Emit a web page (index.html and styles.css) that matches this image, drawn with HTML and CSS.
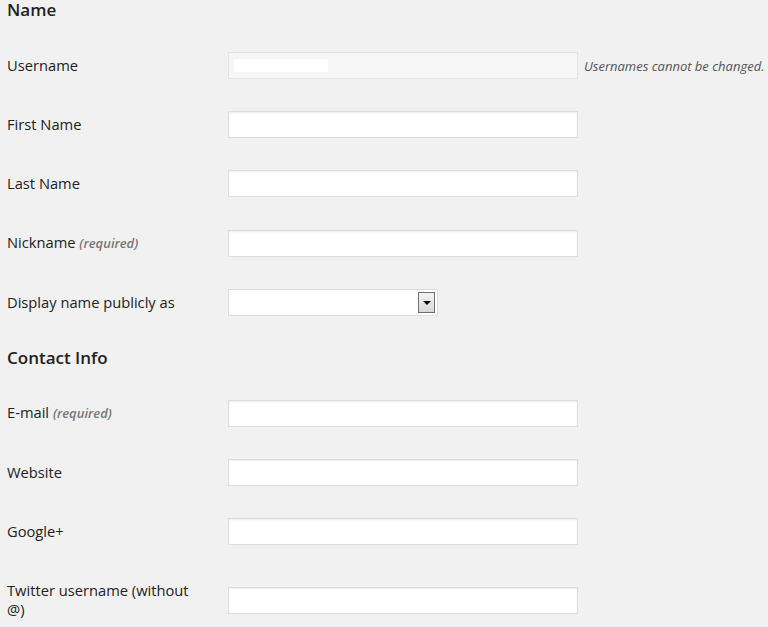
FILE: index.html
```html
<!DOCTYPE html>
<html lang="en">
  <head>
    <meta charset="UTF-8" />
    <meta name="viewport" content="width=device-width, initial-scale=1.0" />
    <title>Profile</title>
    <link rel="stylesheet" href="styles.css">
  </head>
  <body>
    <h3 class="section-title first">Name</h3>
    <div class="form-table">
      <div class="row">
        <label class="field-label">Username</label>
        <div class="field">
          <div class="input disabled"><span class="redacted"></span></div>
          <span class="note">Usernames cannot be changed.</span>
        </div>
      </div>
      <div class="row">
        <label class="field-label">First Name</label>
        <div class="field"><input class="input" type="text" /></div>
      </div>
      <div class="row">
        <label class="field-label">Last Name</label>
        <div class="field"><input class="input" type="text" /></div>
      </div>
      <div class="row">
        <label class="field-label">Nickname <span class="required">(required)</span></label>
        <div class="field"><input class="input" type="text" /></div>
      </div>
      <div class="row">
        <label class="field-label">Display name publicly as</label>
        <div class="field">
          <div class="select">
            <span class="select-btn"><span class="arrow"></span></span>
          </div>
        </div>
      </div>
    </div>

    <h3 class="section-title">Contact Info</h3>
    <div class="form-table">
      <div class="row">
        <label class="field-label">E-mail <span class="required">(required)</span></label>
        <div class="field"><input class="input" type="text" /></div>
      </div>
      <div class="row">
        <label class="field-label">Website</label>
        <div class="field"><input class="input" type="text" /></div>
      </div>
      <div class="row">
        <label class="field-label">Google+</label>
        <div class="field"><input class="input" type="text" /></div>
      </div>
      <div class="row">
        <label class="field-label">Twitter username (without @)</label>
        <div class="field"><input class="input" type="text" /></div>
      </div>
    </div>
  </body>
</html>
```

FILE: styles.css
```css
body {
  margin: 0;
  padding: 0 0 0 7px;
  background-color: #f1f1f1;
  font-family: "Open Sans", "Liberation Sans", sans-serif;
  font-size: 14.7px;
  color: #222;
  overflow: hidden;
}

.section-title {
  margin: 16px 0 15px;
  font-size: 17px;
  font-weight: 600;
  line-height: 20px;
  color: #222;
}

.section-title.first {
  margin: 0 0 16px;
}

.row {
  display: flex;
  align-items: center;
}

.field-label {
  flex: none;
  width: 190px;
  padding: 20px 31px 20px 0;
  line-height: 19px;
}

.required {
  font-size: 13px;
  font-style: italic;
  font-weight: 600;
  color: #777;
}

.field {
  display: flex;
  align-items: center;
}

.input {
  box-sizing: border-box;
  width: 350px;
  height: 27px;
  margin: 0;
  padding: 3px 5px;
  border: 1px solid #ddd;
  background: #fff;
  box-shadow: inset 0 1px 2px rgba(0, 0, 0, 0.07);
  font: inherit;
}

.input.disabled {
  background: #f6f6f6;
  border-color: #e2e2e2;
  box-shadow: none;
  display: flex;
  align-items: center;
}

.redacted {
  display: block;
  width: 94px;
  height: 13px;
  background: #fff;
}

.note {
  margin-left: 6px;
  font-size: 13px;
  font-style: italic;
  color: #555;
}

.select {
  box-sizing: border-box;
  width: 210px;
  height: 27px;
  border: 1px solid #ddd;
  background: #fff;
  display: flex;
  justify-content: flex-end;
  align-items: center;
  padding-right: 2px;
}

.select-btn {
  box-sizing: border-box;
  width: 17px;
  height: 21px;
  border: 1px solid #6f6f6f;
  background: linear-gradient(#f4f4f4, #d8d8d8);
  display: flex;
  justify-content: center;
  align-items: center;
}

.arrow {
  width: 0;
  height: 0;
  border-left: 4px solid transparent;
  border-right: 4px solid transparent;
  border-top: 4px solid #000;
}
```
